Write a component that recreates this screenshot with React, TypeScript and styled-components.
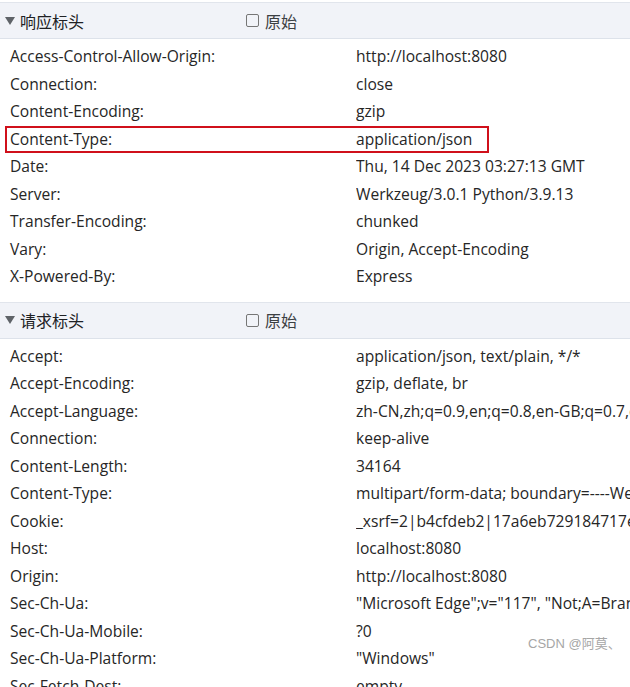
import styled, { createGlobalStyle } from 'styled-components';

const GlobalStyle = createGlobalStyle`
  body {
    margin: 0;
    background: #ffffff;
    font-family: 'Open Sans', 'Noto Sans CJK SC', sans-serif;
    color: #202124;
  }
`;

const Page = styled.div`
  position: relative;
  width: 630px;
  height: 687px;
  overflow: hidden;
  padding-top: 2px;
  box-sizing: border-box;
`;

const Section = styled.section`
  border-top: 1px solid #e1e5ec;
`;

const Header = styled.div`
  height: 35px;
  display: flex;
  align-items: center;
  background: #f1f3f8;
  border-bottom: 1px solid #dde2ea;
  font-size: 16px;
  font-family: 'Noto Sans CJK SC', sans-serif;
`;

const Title = styled.div`
  width: 246px;
  display: flex;
  align-items: center;
  padding-left: 5px;
  box-sizing: border-box;
  gap: 4px;
`;

const Caret = styled.span`
  width: 0;
  height: 0;
  border-left: 5px solid transparent;
  border-right: 5px solid transparent;
  border-top: 8px solid #5f6368;
  margin-right: 1px;
`;

const Raw = styled.label`
  display: flex;
  align-items: center;
  gap: 6px;
  color: #3c4043;
`;

const Box = styled.span`
  width: 11px;
  height: 11px;
  border: 1.5px solid #767676;
  border-radius: 2px;
`;

const List = styled.div`
  padding: 4px 0 11px;
`;

const Row = styled.div<{ $marked?: boolean }>`
  display: grid;
  grid-template-columns: 346px 1fr;
  height: 27.5px;
  line-height: 27.5px;
  font-size: 15.6px;
  white-space: nowrap;
  box-sizing: border-box;
  padding-left: 10px;
  ${(p) =>
    p.$marked &&
    `
    width: 484px;
    margin-left: 5px;
    padding-left: 3px;
    border: 2px solid #d0101b;
    line-height: 23.5px;
  `}
`;

const Name = styled.span`
  color: #262626;
`;

const Value = styled.span`
  color: #262626;
  overflow: hidden;
`;

const Watermark = styled.div`
  position: absolute;
  left: 528px;
  top: 633px;
  font-size: 13px;
  color: #a6a6a6;
  font-family: 'Liberation Sans', 'Noto Sans CJK SC', sans-serif;
`;

const response: [string, string][] = [
  ['Access-Control-Allow-Origin:', 'http://localhost:8080'],
  ['Connection:', 'close'],
  ['Content-Encoding:', 'gzip'],
  ['Content-Type:', 'application/json'],
  ['Date:', 'Thu, 14 Dec 2023 03:27:13 GMT'],
  ['Server:', 'Werkzeug/3.0.1 Python/3.9.13'],
  ['Transfer-Encoding:', 'chunked'],
  ['Vary:', 'Origin, Accept-Encoding'],
  ['X-Powered-By:', 'Express'],
];

const request: [string, string][] = [
  ['Accept:', 'application/json, text/plain, */*'],
  ['Accept-Encoding:', 'gzip, deflate, br'],
  ['Accept-Language:', 'zh-CN,zh;q=0.9,en;q=0.8,en-GB;q=0.7,en-US;q=0.6'],
  ['Connection:', 'keep-alive'],
  ['Content-Length:', '34164'],
  ['Content-Type:', 'multipart/form-data; boundary=----WebKitFormBoundary'],
  ['Cookie:', '_xsrf=2|b4cfdeb2|17a6eb729184717e6a0c'],
  ['Host:', 'localhost:8080'],
  ['Origin:', 'http://localhost:8080'],
  ['Sec-Ch-Ua:', '"Microsoft Edge";v="117", "Not;A=Brand";v="8"'],
  ['Sec-Ch-Ua-Mobile:', '?0'],
  ['Sec-Ch-Ua-Platform:', '"Windows"'],
  ['Sec-Fetch-Dest:', 'empty'],
];

function HeaderBlock({
  title,
  rows,
  marked,
}: {
  title: string;
  rows: [string, string][];
  marked?: number;
}) {
  return (
    <Section>
      <Header>
        <Title>
          <Caret />
          {title}
        </Title>
        <Raw>
          <Box />
          原始
        </Raw>
      </Header>
      <List>
        {rows.map(([k, v], i) => (
          <Row key={k} $marked={i === marked}>
            <Name>{k}</Name>
            <Value>{v}</Value>
          </Row>
        ))}
      </List>
    </Section>
  );
}

export default function App() {
  return (
    <Page>
      <GlobalStyle />
      <HeaderBlock title="响应标头" rows={response} marked={3} />
      <HeaderBlock title="请求标头" rows={request} />
      <Watermark>CSDN @阿莫、</Watermark>
    </Page>
  );
}
